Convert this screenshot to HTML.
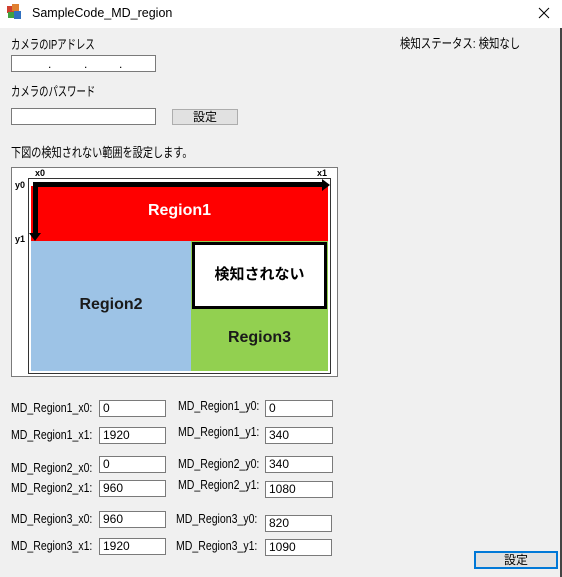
<!DOCTYPE html><html><head><meta charset="utf-8"><style>
*{margin:0;padding:0;box-sizing:border-box}
body{width:562px;height:577px;background:#f0f0f0;position:relative;overflow:hidden;font-family:"Liberation Sans","Noto Sans CJK JP",sans-serif;font-size:12px;color:#000}
.a{position:absolute;white-space:nowrap;line-height:14px;transform-origin:0 0}
.j{font-size:13px;transform:scaleX(0.72)}
.l{font-size:13px;transform:scaleX(0.81)}
.tb{position:absolute;left:0;top:0;width:562px;height:28px;background:#fff}
.in{position:absolute;background:#fff;border:1px solid #7a7a7a;height:17px;font-size:12px;padding-left:3px;line-height:15px}
.btn{position:absolute;background:#e1e1e1;border:1px solid #adadad;text-align:center;line-height:14px}
.b{font-family:"Liberation Sans","Noto Sans CJK JP",sans-serif;font-weight:bold;position:absolute;text-align:center;line-height:1}
</style></head><body>
<div class="tb"></div>
<div class="a" style="left:7px;top:6px;width:7px;height:7px;background:#d04030"></div>
<div class="a" style="left:12px;top:4px;width:7px;height:7px;background:#e08030"></div>
<div class="a" style="left:8px;top:12px;width:6px;height:6px;background:#40a040"></div>
<div class="a" style="left:14px;top:11px;width:7px;height:8px;background:#3070c0"></div>
<div class="a" style="left:32px;top:6px;font-size:12.5px">SampleCode_MD_region</div>
<svg class="a" style="left:538px;top:7px" width="12" height="12"><path d="M1 1L11 11M11 1L1 11" stroke="#000" stroke-width="1"/></svg>
<div class="a" style="left:560px;top:28px;width:2px;height:549px;background:#444"></div>
<div class="a j" style="left:11px;top:38px">カメラのIPアドレス</div>
<div class="in" style="left:11px;top:55px;width:145px"><span style="position:absolute;left:36px;top:1px">.</span><span style="position:absolute;left:72px;top:1px">.</span><span style="position:absolute;left:107px;top:1px">.</span></div>
<div class="a j" style="left:11px;top:85px">カメラのパスワード</div>
<div class="in" style="left:11px;top:108px;width:145px"></div>
<div class="btn" style="left:172px;top:109px;width:66px;height:16px">設定</div>
<div class="a j" style="left:400px;top:37px;transform:scaleX(0.8)">検知ステータス: 検知なし</div>
<div class="a j" style="left:11px;top:146px;transform:scaleX(0.78)">下図の検知されない範囲を設定します。</div>
<div class="a" style="left:11px;top:167px;width:327px;height:210px;border:1px solid #7a7a7a;background:#fff"></div>
<div class="a" style="left:28px;top:178px;width:303px;height:196px;border:1px solid #333;background:#fff"></div>
<div class="a" style="left:31px;top:186px;width:297px;height:55px;background:#ff0000"></div>
<div class="a" style="left:31px;top:241px;width:160px;height:130px;background:#9dc3e6"></div>
<div class="a" style="left:191px;top:241px;width:137px;height:130px;background:#92d050"></div>
<div class="a" style="left:192px;top:242px;width:135px;height:67px;background:#fff;border:3px solid #000"></div>
<div class="b" style="left:31px;top:203px;width:297px;color:#fff;font-size:16px">Region1</div>
<div class="b" style="left:31px;top:297px;width:160px;font-size:16px;color:#1a1a1a">Region2</div>
<div class="b" style="left:191px;top:330px;width:137px;font-size:16px;color:#1a1a1a">Region3</div>
<div class="b" style="left:192px;top:266px;width:135px;font-size:15px;font-family:'Noto Sans CJK JP',sans-serif">検知されない</div>
<div class="a" style="left:33px;top:182px;width:290px;height:5px;background:#000"></div>
<div class="a" style="left:322px;top:179px;width:0;height:0;border-top:6px solid transparent;border-bottom:6px solid transparent;border-left:8px solid #000"></div>
<div class="a" style="left:33px;top:182px;width:5px;height:53px;background:#000"></div>
<div class="a" style="left:29px;top:233px;width:0;height:0;border-left:6px solid transparent;border-right:6px solid transparent;border-top:8px solid #000"></div>
<div class="b" style="left:35px;top:169px;font-size:9px">x0</div>
<div class="b" style="left:317px;top:169px;font-size:9px">x1</div>
<div class="b" style="left:15px;top:181px;font-size:9px">y0</div>
<div class="b" style="left:15px;top:235px;font-size:9px">y1</div>

<div class="a l" style="left:11px;top:401px">MD_Region1_x0:</div><div class="in" style="left:99px;top:400px;width:67px">0</div>
<div class="a l" style="left:178px;top:399px">MD_Region1_y0:</div><div class="in" style="left:265px;top:400px;width:68px">0</div>
<div class="a l" style="left:11px;top:428px">MD_Region1_x1:</div><div class="in" style="left:99px;top:427px;width:67px">1920</div>
<div class="a l" style="left:178px;top:425px">MD_Region1_y1:</div><div class="in" style="left:265px;top:427px;width:68px">340</div>
<div class="a l" style="left:11px;top:461px">MD_Region2_x0:</div><div class="in" style="left:99px;top:456px;width:67px">0</div>
<div class="a l" style="left:178px;top:457px">MD_Region2_y0:</div><div class="in" style="left:265px;top:456px;width:68px">340</div>
<div class="a l" style="left:11px;top:481px">MD_Region2_x1:</div><div class="in" style="left:99px;top:480px;width:67px">960</div>
<div class="a l" style="left:178px;top:478px">MD_Region2_y1:</div><div class="in" style="left:265px;top:481px;width:68px">1080</div>
<div class="a l" style="left:11px;top:512px">MD_Region3_x0:</div><div class="in" style="left:99px;top:511px;width:67px">960</div>
<div class="a l" style="left:176px;top:512px">MD_Region3_y0:</div><div class="in" style="left:265px;top:515px;width:67px">820</div>
<div class="a l" style="left:11px;top:539px">MD_Region3_x1:</div><div class="in" style="left:99px;top:538px;width:67px">1920</div>
<div class="a l" style="left:176px;top:539px">MD_Region3_y1:</div><div class="in" style="left:265px;top:539px;width:67px">1090</div>
<div class="btn" style="left:474px;top:551px;width:84px;height:18px;border:2px solid #0078d7">設定</div>
</body></html>
